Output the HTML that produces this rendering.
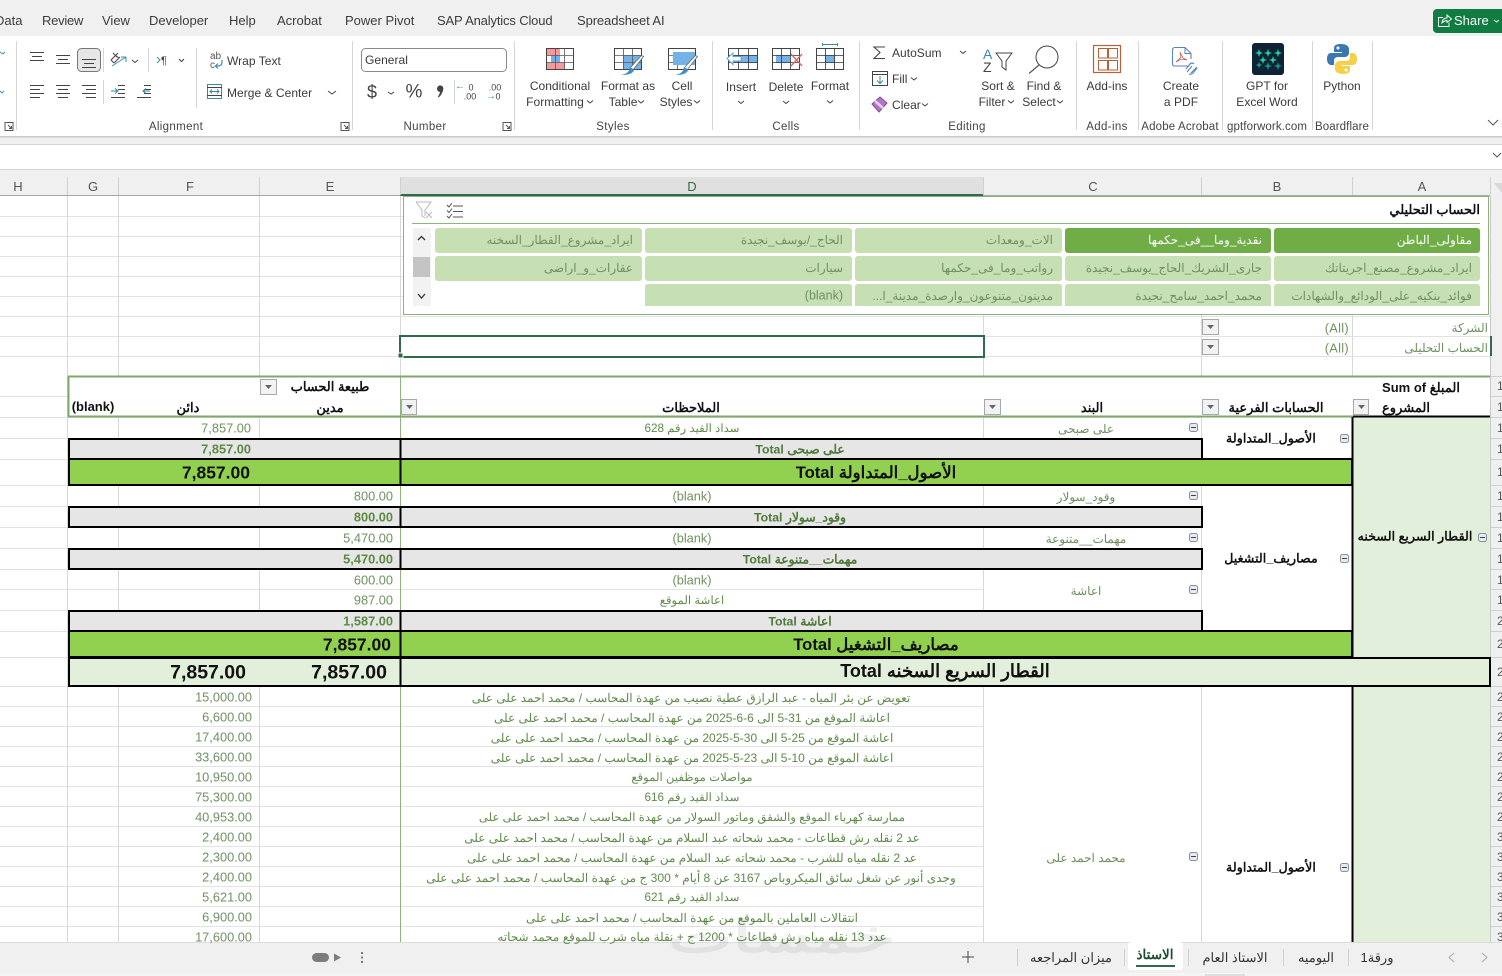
<!DOCTYPE html>
<html lang="en"><head><meta charset="utf-8"><title>Excel</title>
<style>
html,body{margin:0;padding:0}
body{position:relative;width:1502px;height:976px;overflow:hidden;background:#fff;font-family:"Liberation Sans",sans-serif;font-size:12px;color:#333}
svg.o{position:absolute;left:0;top:0}
.c,.l,.r{position:absolute;white-space:nowrap;line-height:1.2}
.c{transform:translate(-50%,-50%)}
.l{transform:translate(0,-50%)}
.r{transform:translate(-100%,-50%)}
.tab{font-size:13px;color:#3c3c3c;line-height:16px;margin-top:1px}
.rb{font-size:12px;color:#3a3a3a;letter-spacing:.03px}
.g{font-size:11.5px;color:#444;letter-spacing:.35px;margin-top:2px}
.h{font-size:13px;color:#555;margin-top:1px}
.a{font-size:11.7px;color:#5f8a4a;margin-top:1px;line-height:16px}
.a2{font-size:12px}
.t{font-size:12px;color:#6f9060;margin-top:1px}
.n{font-size:12.8px;color:#6f9160;margin-top:1px}
.nb{font-size:12.8px;font-weight:bold;color:#5c8a45;margin-top:1px}
.big{font-size:17.5px;font-weight:bold;color:#111;margin-top:1px}
.big2{font-size:19.5px;font-weight:bold;color:#111;margin-top:1px}
.th{font-size:13px;font-weight:bold;color:#111;margin-top:1px}
.tr{font-size:12.7px;font-weight:bold;color:#111;margin-top:1px}
.tg{font-size:12.3px;font-weight:bold;color:#4e7a3a;margin-top:1px}
.tb{font-size:16.6px;font-weight:bold;color:#111;margin-top:1px}
.s{font-size:12px;color:#6f9060}
.sw{font-size:12px;color:#fff}
</style></head><body>

<svg class="o" width="1502" height="976" viewBox="0 0 1502 976" xmlns="http://www.w3.org/2000/svg">
<!-- chrome -->
<rect x="0" y="0" width="1502" height="36" fill="#f0f0f0"/>
<rect x="0" y="36" width="1502" height="100" fill="#fff"/>
<rect x="0" y="136" width="1502" height="9" fill="#f0f0f0"/>
<rect x="0" y="136" width="1502" height="1.500" fill="#c9c9c9"/>
<rect x="0" y="144" width="1502" height="1" fill="#d4d4d4"/>
<rect x="0" y="169" width="1502" height="1" fill="#d4d4d4"/>
<rect x="0" y="170" width="1502" height="26" fill="#f0f0f0"/>
<rect x="400" y="177" width="583" height="18" fill="#e0e0e0"/>
<rect x="0" y="195" width="1490" height="1" fill="#a8a8a8"/>
<rect x="400" y="194" width="583" height="2" fill="#2f6b4a"/>
<g stroke="#d0d0d0"><path d="M67.500 177V195M118.500 177V195M259.500 177V195M400.500 177V195M983.500 177V195M1201.500 177V195M1352.500 177V195M1490.500 177V195"/></g>
<path d="M1494 183L1502 183L1502 193Z" fill="#d8d8d8"/>

<!-- share -->
<rect x="1433" y="9" width="75" height="24" rx="4" fill="#107c41"/>
<path d="M1443 17.500H1438.500V26.500H1449V22.500M1442 23C1442 20 1444 18 1447 18V15L1451.500 19L1447 22.500V20.500C1445 20.500 1443.500 21.500 1442 23Z" fill="none" stroke="#fff" stroke-width=".9"/>
<path d="M1494 20L1496.500 22L1499 20" fill="none" stroke="#fff" stroke-width="1"/>

<!-- group separators -->
<g stroke="#d6d6d6"><path d="M16.500 41V130M352.500 41V130M514.500 41V130M712.500 41V130M859.500 41V130M1076.500 41V130M1138.500 41V130M1222.500 41V130M1312.500 41V130M1372.500 41V130M103.500 48V72M103.500 80V104M148.500 48V72M196.500 48V108M454.500 80V104"/></g>

<!-- left fragments -->
<path d="M0 52L3 54L5 52M0 91L2 93L4 91" fill="none" stroke="#4a90b8"/>
<!-- launchers -->
<g fill="none" stroke="#555"><path d="M5 122.500H13V130.500H5ZM8 125L11.500 128.500M11.500 126V128.500H9"/><path d="M341 122.500H349V130.500H341ZM344 125L347.500 128.500M347.500 126V128.500H345"/><path d="M503 122.500H511V130.500H503ZM506 125L509.500 128.500M509.500 126V128.500H507"/></g>

<!-- alignment -->
<rect x="77.500" y="48.500" width="23" height="23" rx="4" fill="#e6e6e6" stroke="#777"/>
<g stroke="#444" fill="none">
<path d="M30 52.500H44M32 56.500H42M30 60.500H44"/>
<path d="M56 55.500H70M58 59.500H68M56 63.500H70"/>
<path d="M82 59.500H96M84 63.500H94M82 67.500H96"/>
<path d="M30 85.500H44M30 89.500H40M30 93.500H44M30 97.500H40"/>
<path d="M56 85.500H70M58 89.500H68M56 93.500H70M58 97.500H68"/>
<path d="M82 85.500H96M86 89.500H96M82 93.500H96M86 97.500H96"/>
<path d="M118 85.500H125M118 89.500H125M118 93.500H125M111 97.500H125"/>
<path d="M144 85.500H151M144 89.500H151M144 93.500H151M137 97.500H151"/>
<path d="M132 60L135 62.500L138 60" /><path d="M179 59L181.500 61.500L184 59"/><path d="M328 91L332 94L336 91"/><path d="M388 92L391 94L394 92"/><path d="M495 58L498 61L501 58"/>
<path d="M111 60L118 53M114 63L120 57M111 60L114 63M113 53L117 57M115 55L119 58"/>
</g>
<path d="M112 66L126 57M126 57H121M126 57V62" fill="none" stroke="#3f8db0"/>
<path d="M111 91H118M115 88.500L118 91L115 93.500M150 91H143M146 88.500L143 91L146 93.500" fill="none" stroke="#2d86a8"/>
<path d="M157 57L160 60L157 63" fill="none" stroke="#3f8db0"/>
<text x="161" y="64" font-size="11" fill="#444">¶</text>
<text x="210" y="59" font-size="10" fill="#555">ab</text>
<text x="210" y="68" font-size="10" fill="#555">c</text>
<path d="M222 60V62C222 65 220 66 218 66H216M218 63.500L215.500 66L218 68.500" fill="none" stroke="#3f8db0" stroke-width="1.200"/>
<rect x="207.500" y="84.500" width="14" height="14" fill="#fff" stroke="#3f86a8"/>
<path d="M207 87.500H222M207 95.500H222" stroke="#444"/>
<path d="M210 91.500H219M212 89.500L210 91.500L212 93.500M217 89.500L219 91.500L217 93.500" fill="none" stroke="#3f86a8"/>

<!-- number -->
<rect x="361.500" y="48.500" width="145" height="23" rx="4" fill="#fff" stroke="#8a8a8a"/>
<path d="M437 88.500a3.200 3.200 0 1 1 6.200 1.200C442.500 93 441 95.500 438.500 97.500L437.800 96.800C439 95 439.800 93.500 440 92A3.200 3.200 0 0 1 437 88.500Z" fill="#444"/>

<!-- conditional formatting -->
<g fill="none" stroke="#444">
<rect x="546.500" y="48.500" width="27" height="21" fill="#fff"/>
</g>
<rect x="547" y="49" width="13" height="6.500" fill="#f49a9a"/><rect x="551" y="55.500" width="9" height="7" fill="#6fb0e6"/><rect x="547" y="62.500" width="18" height="6.500" fill="#f49a9a"/>
<path d="M546.500 55.500H573.500M546.500 62.500H573.500M555.500 48.500V69.500M564.500 48.500V69.500" stroke="#555" fill="none" stroke-width=".8"/>
<!-- format as table -->
<rect x="614.500" y="48.500" width="27" height="21" fill="#fff" stroke="#444"/>
<rect x="623" y="55" width="18" height="14" fill="#74b3ea"/>
<path d="M614.500 55.500H641.500M614.500 62.500H641.500M623.500 48.500V69.500M632.500 48.500V69.500" stroke="#555" fill="none" stroke-width=".8"/>
<path d="M630 68L641.500 55.500L643.500 56.500L633 70Z" fill="#fff" stroke="#666" stroke-width=".8"/>
<path d="M621 74.500C626 74.500 629 72 630 68C632 67.500 633.500 69 634 70.500C632 74 627 75.500 621 74.500Z" fill="#3f8cc8"/>
<!-- cell styles -->
<rect x="668.500" y="48.500" width="27" height="21" fill="#fff" stroke="#444"/>
<rect x="673" y="52" width="22" height="13" fill="#74b3ea"/>
<path d="M668.500 55.500H673M668.500 62.500H673M677.500 65V69.500" stroke="#555" fill="none" stroke-width=".8"/>
<path d="M684 68L695.500 55.500L697.500 56.500L687 70Z" fill="#fff" stroke="#666" stroke-width=".8"/>
<path d="M675 74.500C680 74.500 683 72 684 68C686 67.500 687.500 69 688 70.500C686 74 681 75.500 675 74.500Z" fill="#3f8cc8"/>
<!-- insert -->
<rect x="728.500" y="48.500" width="29" height="21" fill="#fff" stroke="#444"/>
<rect x="730" y="55" width="27" height="8" fill="#74b3ea"/>
<path d="M728.500 55.500H757.500M728.500 62.500H757.500M738.500 48.500V69.500M748.500 48.500V69.500" stroke="#333" fill="none" stroke-width=".8"/>
<path d="M727 58.500L733 53V56.500H741V61H733V64.500Z" fill="#fff" stroke="#5aa3d8"/>
<!-- delete -->
<rect x="772.500" y="48.500" width="27" height="21" fill="#fff" stroke="#444"/>
<rect x="776" y="55" width="14" height="8" fill="#74b3ea"/>
<path d="M772.500 55.500H799.500M772.500 62.500H799.500M781.500 48.500V69.500M790.500 48.500V69.500" stroke="#333" fill="none" stroke-width=".8"/>
<path d="M791 54L802 66M802 54L791 66" stroke="#e06060" stroke-width="1.300" fill="none"/>
<!-- format -->
<rect x="816.500" y="48.500" width="27" height="21" fill="#fff" stroke="#444"/>
<rect x="825" y="55" width="10" height="8" fill="#74b3ea"/>
<path d="M816.500 55.500H843.500M816.500 62.500H843.500M825.500 48.500V69.500M834.500 48.500V69.500" stroke="#333" fill="none" stroke-width=".8"/>
<path d="M822.500 43V46M837.500 43V46M822.500 44.500H837.500" stroke="#3f86a8" fill="none"/>
<!-- editing -->
<path d="M885 47H874L880 52.500L874 58.500H885" fill="none" stroke="#444" stroke-width="1.100"/>
<path d="M960 51L963 53.500L966 51" fill="none" stroke="#444"/>
<rect x="872.500" y="71.500" width="15" height="14" fill="#fff" stroke="#444"/>
<path d="M872.500 74.500H887.500" stroke="#444"/>
<path d="M880 76V83M877 80.500L880 83.500L883 80.500" fill="none" stroke="#3f86a8"/>
<path d="M872 104L880 97L887 103L879 112Z" fill="#b276c8" stroke="#7d4d96"/>
<path d="M875 101L883 108" stroke="#e8d0ee" stroke-width="2.500"/>
<!-- sort -->
<text x="983" y="59" font-size="14" fill="#3f86b8">A</text>
<text x="983" y="72" font-size="14" fill="#444">Z</text>
<path d="M996 53H1012L1006 61V70L1002 67V61Z" fill="#fff" stroke="#444"/>
<!-- find -->
<circle cx="1047" cy="57" r="11" fill="none" stroke="#444"/>
<path d="M1039 65L1029 73.500" stroke="#555" stroke-width="1.200"/>
<!-- add-ins -->
<rect x="1093.500" y="45.500" width="27" height="27" fill="#fff" stroke="#b5623a" stroke-width="1.200"/>
<rect x="1098.500" y="48.500" width="9" height="9.500" fill="#fff" stroke="#b5623a"/>
<rect x="1108.500" y="48.500" width="9" height="9.500" fill="#fff" stroke="#b5623a"/>
<rect x="1098.500" y="60.500" width="9" height="9.500" fill="#fff" stroke="#b5623a"/>
<rect x="1108.500" y="60.500" width="9" height="9.500" fill="#fff" stroke="#b5623a"/>
<!-- pdf -->
<path d="M1189 66H1175Q1172.500 66 1172.500 63.500V50Q1172.500 47.500 1175 47.500H1185L1191 53.500V59" fill="none" stroke="#5a82bd" stroke-width="1.100"/>
<path d="M1185 47.500V53.500H1191" fill="none" stroke="#5a82bd"/>
<path d="M1176 62L1181 57L1180 52L1183 58L1187 60L1181 59Z" fill="none" stroke="#c0605a" stroke-width=".8"/>
<path d="M1187 72L1192 66M1191 73L1197 67M1186 69L1190 64Q1192 62 1194 64M1189 74Q1191 75 1193 73L1197 68" fill="none" stroke="#5a82bd" stroke-width="1.100"/>
<!-- gpt -->
<rect x="1252" y="43" width="32" height="32" rx="3" fill="#0f2338"/>
<path d="M1259 49l1 3 3 1-3 1-1 3-1-3-3-1 3-1zM1268 49l1 3 3 1-3 1-1 3-1-3-3-1 3-1zM1278 49l1 3 3 1-3 1-1 3-1-3-3-1 3-1zM1263 56l1 3 3 1-3 1-1 3-1-3-3-1 3-1zM1273 56l1 3 3 1-3 1-1 3-1-3-3-1 3-1z" fill="#1fd39b"/>
<path d="M1268 62l1 3 3 1-3 1-1 3-1-3-3-1 3-1zM1278 62l1 3 3 1-3 1-1 3-1-3-3-1 3-1zM1259 62l1 2 2 1-2 1-1 2-1-2-2-1 2-1z" fill="#129a78"/>
<!-- python -->
<path d="M1341 44C1334 44 1334 47 1334 49V52H1342V53H1331C1328 53 1327 56 1327 59C1327 63 1329 65 1331 65H1334V61C1334 58 1336 57 1338 57H1345C1347 57 1349 55 1349 53V49C1349 46 1346 44 1341 44Z" fill="#3c78b0"/>
<path d="M1343 74C1350 74 1350 71 1350 69V66H1342V65H1353C1356 65 1357 62 1357 59C1357 55 1355 53 1353 53H1350V57C1350 60 1348 61 1346 61H1339C1337 61 1335 63 1335 65V69C1335 72 1338 74 1343 74Z" fill="#f7d04a"/>
<circle cx="1338" cy="48" r="1.500" fill="#fff"/><circle cx="1346" cy="70" r="1.500" fill="#fff"/>
<!-- ribbon chevrons -->
<g fill="none" stroke="#444">
<path d="M587 100.500L590 103L593 100.500M638 100.500L641 103L644 100.500M694 100.500L697 103L700 100.500M738 101L741 103.500L744 101M783 101L786 103.500L789 101M827 100.500L830 103L833 100.500M911 77.500L914 80L917 77.500M922 103.500L925 106L928 103.500M1008 100.500L1011 103L1014 100.500M1057 100.500L1060 103L1063 100.500"/>
<path d="M1488 120L1493 125L1498 120M1493 153L1497 157L1501 153" stroke="#555"/>
</g>

<!-- sheet grid -->
<g stroke="#e2e2e2" fill="none">
<path d="M0 216.500H1490M0 236.500H1490M0 256.500H1490M0 276.500H1490M0 296.500H1490M0 316.500H1490M0 336.500H1490M0 356.500H1490M0 396.500H67M0 417.500H1490M0 438.500H1490M0 459.500H1490M0 485.500H1490M0 506.500H1490M0 527.500H1490M0 548.500H1490M0 569.500H1490M0 589.500H1490M0 610.500H1490M0 631.500H1490M0 657.500H1490M0 686.500H1490M0 706.500H1490M0 726.500H1490M0 746.500H1490M0 766.500H1490M0 786.500H1490M0 806.500H1490M0 826.500H1490M0 846.500H1490M0 866.500H1490M0 886.500H1490M0 906.500H1490M0 926.500H1490"/>
</g>
<g stroke="#d8d8d8" fill="none"><path d="M67.500 196V942M118.500 196V942M259.500 196V942M400.500 196V376M983.500 196V942M1201.500 196V942M1352.500 196V942"/></g>
<path d="M1490.500 196V942" stroke="#c8c8c8"/>
<rect x="1491" y="196" width="11" height="746" fill="#f0f0f0"/>
<g stroke="#cfcfcf"><path d="M1491 376.500H1502M1491 396.500H1502M1491 417.500H1502M1491 438.500H1502M1491 459.500H1502M1491 485.500H1502M1491 506.500H1502M1491 527.500H1502M1491 548.500H1502M1491 569.500H1502M1491 589.500H1502M1491 610.500H1502M1491 631.500H1502M1491 657.500H1502M1491 686.500H1502M1491 706.500H1502M1491 726.500H1502M1491 746.500H1502M1491 766.500H1502M1491 786.500H1502M1491 806.500H1502M1491 826.500H1502M1491 846.500H1502M1491 866.500H1502M1491 886.500H1502M1491 906.500H1502M1491 926.500H1502"/></g>
<rect x="1490" y="336" width="2" height="20" fill="#2f6b4a"/>

<!-- pivot header -->
<rect x="68" y="377" width="1422" height="40" fill="#fff"/>
<!-- merged whites -->
<rect x="984" y="569" width="217" height="41" fill="#fff"/>
<rect x="1202" y="417" width="150" height="42" fill="#fff"/>
<rect x="1202" y="485" width="150" height="146" fill="#fff"/>
<rect x="984" y="687" width="217" height="256" fill="#fff"/>
<rect x="1202" y="687" width="150" height="256" fill="#fff"/>
<path d="M983.500 569V610M1201.500 417V459" stroke="#d8d8d8"/>
<!-- A col -->
<rect x="1353" y="417" width="137" height="241" fill="#e2efda"/>
<rect x="1353" y="686" width="137" height="257" fill="#e2efda"/>

<!-- green line D left, header -->
<path d="M400.500 377V942" stroke="#8fb27e"/>
<path d="M68 376.500H1490M68 416.500H1353" stroke="#7fa86a" stroke-width="2"/>
<path d="M68.500 376V417" stroke="#7fa86a" stroke-width="2"/>

<!-- total rows -->
<g stroke="#000" stroke-width="2">
<rect x="69" y="439" width="1133" height="20" fill="#e7e6e6"/>
<rect x="69" y="459" width="1283" height="26" fill="#92d050"/>
<rect x="69" y="507" width="1133" height="20" fill="#e7e6e6"/>
<rect x="69" y="549" width="1133" height="20" fill="#e7e6e6"/>
<rect x="69" y="611" width="1133" height="20" fill="#e7e6e6"/>
<rect x="69" y="631" width="1283" height="26" fill="#92d050"/>
<rect x="69" y="658" width="1421" height="28" fill="#e2efda"/>
<path d="M400.500 439V485M400.500 507V527M400.500 549V569M400.500 611V686" fill="none"/>
<path d="M1352.500 417V657M1352.500 686V942M1353 416.500H1490" fill="none"/>
</g>

<!-- selection -->
<rect x="400" y="336" width="584" height="21" fill="#fff" stroke="#2f6b4a" stroke-width="2"/>
<rect x="398" y="353" width="5" height="5" fill="#2f6b4a" stroke="#fff"/>

<!-- slicer -->
<rect x="403.500" y="196.500" width="1085" height="118" fill="#fff" stroke="#8fb27e"/>
<path d="M412 223.500H1480" stroke="#8fb27e"/>
<path d="M416 202H431L425 210V216" fill="none" stroke="#b8b8b8"/><path d="M416 202L422 210V216L425 218" fill="none" stroke="#b8b8b8"/><path d="M426 212L432 218M432 212L426 218" stroke="#b8b8b8"/>
<path d="M447 205L449 207L452 203M447 210.500L449 212.500L452 208.500M447 216L449 218L452 214" fill="none" stroke="#555"/><path d="M453 206H463M453 211.500H463M453 217H463" stroke="#555"/>
<rect x="413" y="228" width="18" height="78" fill="#f2f2f2"/>
<rect x="413" y="257" width="17" height="20" fill="#c4c4c4"/>
<path d="M418 240L421.500 236.500L425 240M418 294L421.500 298L425 294" fill="none" stroke="#333" stroke-width="1.300"/>
<g fill="#c6e0b4">
<rect x="1274" y="228" width="206" height="25" rx="3" fill="#70ad47"/>
<rect x="1065" y="228" width="206" height="25" rx="3" fill="#70ad47"/>
<rect x="855" y="228" width="207" height="25" rx="3"/>
<rect x="645" y="228" width="207" height="25" rx="3"/>
<rect x="435" y="228" width="207" height="25" rx="3"/>
<rect x="1274" y="256" width="206" height="25" rx="3"/>
<rect x="1065" y="256" width="206" height="25" rx="3"/>
<rect x="855" y="256" width="207" height="25" rx="3"/>
<rect x="645" y="256" width="207" height="25" rx="3"/>
<rect x="435" y="256" width="207" height="25" rx="3"/>
<path d="M1274 306V287Q1274 284 1277 284H1477Q1480 284 1480 287V306ZM1065 306V287Q1065 284 1068 284H1268Q1271 284 1271 287V306ZM855 306V287Q855 284 858 284H1059Q1062 284 1062 287V306ZM645 306V287Q645 284 648 284H849Q852 284 852 287V306Z"/>
</g>

<!-- dropdown buttons -->
<g fill="#f2f2f2" stroke="#a8a8a8">
<rect x="1202.500" y="319.500" width="16" height="15"/><rect x="1202.500" y="339.500" width="16" height="15"/>
<rect x="260.500" y="379.500" width="16" height="15"/><rect x="401.500" y="399.500" width="15" height="15"/><rect x="984.500" y="399.500" width="16" height="15"/><rect x="1202.500" y="399.500" width="16" height="15"/><rect x="1353.500" y="399.500" width="15" height="15"/>
</g>
<g fill="#666"><path d="M1207 325H1214L1210.500 329ZM1207 345H1214L1210.500 349ZM265 385H272L268.500 389ZM406 405H413L409.500 409ZM989 405H996L992.500 409ZM1207 405H1214L1210.500 409ZM1358 405H1365L1361.500 409Z"/></g>

<!-- outline minus boxes -->
<g fill="#e6eaf2" stroke="#8a8f9c">
<rect x="1189.500" y="423.500" width="8" height="8" rx="2"/><rect x="1340.500" y="434.500" width="8" height="8" rx="2"/><rect x="1189.500" y="491.500" width="8" height="8" rx="2"/><rect x="1189.500" y="533.500" width="8" height="8" rx="2"/><rect x="1189.500" y="585.500" width="8" height="8" rx="2"/><rect x="1340.500" y="554.500" width="8" height="8" rx="2"/><rect x="1478.500" y="533.500" width="8" height="8" rx="2"/><rect x="1189.500" y="852.500" width="8" height="8" rx="2"/><rect x="1340.500" y="863.500" width="8" height="8" rx="2"/>
</g>
<path d="M1191 427.500H1196M1342 438.500H1347M1191 495.500H1196M1191 537.500H1196M1191 589.500H1196M1342 558.500H1347M1480 537.500H1485M1191 856.500H1196M1342 867.500H1347" stroke="#444"/>

<!-- bottom bar -->
<rect x="0" y="942" width="1502" height="34" fill="#f0f0f0"/>
<rect x="0" y="942" width="1502" height="1" fill="#dcdcdc"/>
<rect x="0" y="973" width="1502" height="3" fill="#f5f5f5"/>
<rect x="1205" y="974" width="40" height="2" fill="#dedede"/>
<rect x="1128" y="942" width="55" height="28" rx="3" fill="#fff"/>
<rect x="1136" y="965" width="39" height="2" fill="#2f6b4a"/>
<path d="M1017.500 949V966M1124.500 949V966M1188.500 949V966M1283.500 949V966M1348.500 949V966" stroke="#cfcfcf"/>
<rect x="312" y="953" width="17" height="9" rx="4.500" fill="#7d7d7d"/>
<path d="M334 953.500L341 957.500L334 961.500Z" fill="#7d7d7d"/>
<path d="M362 952V954M362 956.500V958.500M362 961V963" stroke="#555" stroke-width="1.500"/>
<path d="M968 951V963M962 957H974" stroke="#444"/>
<path d="M1454 953L1449 957.500L1454 962M1482 953L1487 957.500L1482 962" fill="none" stroke="#aaa"/>
</svg>

<!-- tabs -->
<div class="l tab" style="left:-5px;top:20px">Data</div>
<div class="l tab" style="left:42px;top:20px;letter-spacing:-.25px">Review</div>
<div class="l tab" style="left:102px;top:20px">View</div>
<div class="l tab" style="left:149px;top:20px">Developer</div>
<div class="l tab" style="left:229px;top:20px">Help</div>
<div class="l tab" style="left:277px;top:20px">Acrobat</div>
<div class="l tab" style="left:345px;top:20px">Power Pivot</div>
<div class="l tab" style="left:437px;top:20px;letter-spacing:-.15px">SAP Analytics Cloud</div>
<div class="l tab" style="left:577px;top:20px;letter-spacing:-.1px">Spreadsheet AI</div>
<div class="l" style="left:1454px;top:21px;color:#fff;font-size:13px">Share</div>

<!-- ribbon text -->
<div class="l rb" style="left:227px;top:61px">Wrap Text</div>
<div class="l rb" style="left:227px;top:93px">Merge &amp; Center</div>
<div class="l rb" style="left:365px;top:60px">General</div>
<div class="c" style="left:372px;top:93px;font-size:18px;color:#444">$</div>
<div class="c" style="left:414px;top:93px;font-size:19px;color:#444">%</div>
<div class="c" style="left:471px;top:88px;font-size:9px;color:#444">0</div><div class="c" style="left:470px;top:97px;font-size:9px;color:#444">.00</div>
<div class="c" style="left:460px;top:87px;font-size:10px;color:#2d86a8">←</div>
<div class="c" style="left:495px;top:88px;font-size:9px;color:#444">.00</div><div class="c" style="left:498px;top:97px;font-size:9px;color:#444">0</div>
<div class="c" style="left:491px;top:97px;font-size:10px;color:#2d86a8">→</div>
<div class="c rb" style="left:560px;top:86px">Conditional</div><div class="c rb" style="left:555px;top:102px">Formatting</div>
<div class="c rb" style="left:628px;top:86px">Format as</div><div class="c rb" style="left:623px;top:102px">Table</div>
<div class="c rb" style="left:682px;top:86px">Cell</div><div class="c rb" style="left:676px;top:102px">Styles</div>
<div class="c rb" style="left:741px;top:87px">Insert</div>
<div class="c rb" style="left:786px;top:87px">Delete</div>
<div class="c rb" style="left:830px;top:86px">Format</div>
<div class="l rb" style="left:892px;top:53px">AutoSum</div>
<div class="l rb" style="left:892px;top:79px">Fill</div>
<div class="l rb" style="left:892px;top:105px">Clear</div>
<div class="c rb" style="left:998px;top:86px">Sort &amp;</div><div class="c rb" style="left:992px;top:102px">Filter</div>
<div class="c rb" style="left:1044px;top:86px">Find &amp;</div><div class="c rb" style="left:1039px;top:102px">Select</div>
<div class="c rb" style="left:1107px;top:86px">Add-ins</div>
<div class="c rb" style="left:1181px;top:86px">Create</div><div class="c rb" style="left:1181px;top:102px">a PDF</div>
<div class="c rb" style="left:1267px;top:86px">GPT for</div><div class="c rb" style="left:1267px;top:102px">Excel Word</div>
<div class="c rb" style="left:1342px;top:86px">Python</div>
<div class="c g" style="left:176px;top:126px">Alignment</div>
<div class="c g" style="left:425px;top:126px">Number</div>
<div class="c g" style="left:613px;top:126px">Styles</div>
<div class="c g" style="left:786px;top:126px">Cells</div>
<div class="c g" style="left:967px;top:126px">Editing</div>
<div class="c g" style="left:1107px;top:126px">Add-ins</div>
<div class="c g" style="left:1180px;top:126px;letter-spacing:.15px">Adobe Acrobat</div>
<div class="c g" style="left:1267px;top:126px;letter-spacing:.1px">gptforwork.com</div>
<div class="c g" style="left:1342px;top:126px;letter-spacing:.1px">Boardflare</div>

<!-- col headers -->
<div class="c h" style="left:18px;top:186px">H</div>
<div class="c h" style="left:93px;top:186px">G</div>
<div class="c h" style="left:190px;top:186px">F</div>
<div class="c h" style="left:330px;top:186px">E</div>
<div class="c h" style="left:692px;top:186px;color:#2f6b4a">D</div>
<div class="c h" style="left:1093px;top:186px">C</div>
<div class="c h" style="left:1277px;top:186px">B</div>
<div class="c h" style="left:1422px;top:186px">A</div>

<!-- slicer text -->
<div class="r th" dir="rtl" style="left:1480px;top:209px">الحساب التحليلي</div>
<div class="r sw" dir="rtl" style="left:1472px;top:240px">مقاولى_الباطن</div>
<div class="r sw" dir="rtl" style="left:1262px;top:240px">نقدية_وما__فى_حكمها</div>
<div class="r s" dir="rtl" style="left:1053px;top:240px">الات_ومعدات</div>
<div class="r s" dir="rtl" style="left:843px;top:240px">الحاج_/يوسف_نجيدة</div>
<div class="r s" dir="rtl" style="left:633px;top:240px">ايراد_مشروع_القطار_السخنه</div>
<div class="r s" dir="rtl" style="left:1472px;top:268px">ايراد_مشروع_مصنع_اجريتاتك</div>
<div class="r s" dir="rtl" style="left:1262px;top:268px">جارى_الشريك_الحاج_يوسف_نجيدة</div>
<div class="r s" dir="rtl" style="left:1053px;top:268px">رواتب_وما_فى_حكمها</div>
<div class="r s" dir="rtl" style="left:843px;top:268px">سيارات</div>
<div class="r s" dir="rtl" style="left:633px;top:268px">عقارات_و_اراضى</div>
<div class="r s" dir="rtl" style="left:1472px;top:296px">فوائد_بنكيه_على_الودائع_والشهادات</div>
<div class="r s" dir="rtl" style="left:1262px;top:296px">محمد_احمد_سامح_نجيدة</div>
<div class="r s" dir="rtl" style="left:1053px;top:296px">مدينون_متنوعون_وارصدة_مدينة_ا...</div>
<div class="r s" style="left:843px;top:296px;font-size:12.500px">(blank)</div>

<!-- page filters -->
<div class="r t" dir="rtl" style="left:1488px;top:327px">الشركة</div>
<div class="r t" dir="rtl" style="left:1488px;top:347px">الحساب التحليلى</div>
<div class="r n" style="left:1349px;top:327px;letter-spacing:.3px">(All)</div>
<div class="r n" style="left:1349px;top:347px;letter-spacing:.3px">(All)</div>

<!-- pivot headers -->
<div class="c th" dir="rtl" style="left:330px;top:386px">طبيعة الحساب</div>
<div class="c th" dir="rtl" style="left:1421px;top:387px">المبلغ Sum of</div>
<div class="c th" dir="rtl" style="left:1406px;top:407px">المشروع</div>
<div class="c th" dir="rtl" style="left:1276px;top:407px">الحسابات الفرعية</div>
<div class="c th" dir="rtl" style="left:1092px;top:407px">البند</div>
<div class="c th" dir="rtl" style="left:691px;top:407px">الملاحظات</div>
<div class="c th" dir="rtl" style="left:330px;top:407px">مدين</div>
<div class="c th" dir="rtl" style="left:188px;top:407px">دائن</div>
<div class="c th" style="left:93px;top:406px">(blank)</div>

<!-- tree -->
<div class="c tr" dir="rtl" style="left:1271px;top:438px">الأصول_المتداولة</div>
<div class="c tr" dir="rtl" style="left:1271px;top:558px">مصاريف_التشغيل</div>
<div class="c tr" dir="rtl" style="left:1415px;top:536px">القطار السريع السخنه</div>
<div class="c tr" dir="rtl" style="left:1271px;top:867px">الأصول_المتداولة</div>
<div class="c t" dir="rtl" style="left:1086px;top:428px">على صبحى</div>
<div class="c t" dir="rtl" style="left:1086px;top:496px">وقود_سولار</div>
<div class="c t" dir="rtl" style="left:1086px;top:538px">مهمات__متنوعة</div>
<div class="c t" dir="rtl" style="left:1086px;top:590px">اعاشة</div>
<div class="c t" dir="rtl" style="left:1086px;top:857px">محمد احمد على</div>

<!-- notes top -->
<div class="c a" dir="rtl" style="left:692px;top:428px">سداد القيد رقم 628</div>
<div class="c n" style="left:692px;top:495px">(blank)</div>
<div class="c n" style="left:692px;top:537px">(blank)</div>
<div class="c n" style="left:692px;top:579px">(blank)</div>
<div class="c a" dir="rtl" style="left:692px;top:600px">اعاشة الموقع</div>

<!-- totals -->
<div class="c tg" dir="rtl" style="left:800px;top:449px">على صبحى Total</div>
<div class="c tb" dir="rtl" style="left:876px;top:472px">الأصول_المتداولة Total</div>
<div class="c tg" dir="rtl" style="left:800px;top:517px">وقود_سولار Total</div>
<div class="c tg" dir="rtl" style="left:800px;top:559px">مهمات__متنوعة Total</div>
<div class="c tg" dir="rtl" style="left:800px;top:621px">اعاشة Total</div>
<div class="c tb" dir="rtl" style="left:876px;top:644px">مصاريف_التشغيل Total</div>
<div class="c tb" dir="rtl" style="left:945px;top:671px;font-size:18px">القطار السريع السخنه Total</div>

<!-- amounts -->
<div class="r n" style="left:251px;top:427px">7,857.00</div>
<div class="r nb" style="left:251px;top:448px">7,857.00</div>
<div class="r big" style="left:250px;top:472px">7,857.00</div>
<div class="r n" style="left:393px;top:495px">800.00</div>
<div class="r nb" style="left:393px;top:516px">800.00</div>
<div class="r n" style="left:393px;top:537px">5,470.00</div>
<div class="r nb" style="left:393px;top:558px">5,470.00</div>
<div class="r n" style="left:393px;top:579px">600.00</div>
<div class="r n" style="left:393px;top:599px">987.00</div>
<div class="r nb" style="left:393px;top:620px">1,587.00</div>
<div class="r big" style="left:391px;top:644px">7,857.00</div>
<div class="r big2" style="left:387px;top:672px">7,857.00</div>
<div class="r big2" style="left:246px;top:672px">7,857.00</div>
<div class="r n" style="left:252px;top:696px">15,000.00</div>
<div class="r n" style="left:252px;top:716px">6,600.00</div>
<div class="r n" style="left:252px;top:736px">17,400.00</div>
<div class="r n" style="left:252px;top:756px">33,600.00</div>
<div class="r n" style="left:252px;top:776px">10,950.00</div>
<div class="r n" style="left:252px;top:796px">75,300.00</div>
<div class="r n" style="left:252px;top:816px">40,953.00</div>
<div class="r n" style="left:252px;top:836px">2,400.00</div>
<div class="r n" style="left:252px;top:856px">2,300.00</div>
<div class="r n" style="left:252px;top:876px">2,400.00</div>
<div class="r n" style="left:252px;top:896px">5,621.00</div>
<div class="r n" style="left:252px;top:916px">6,900.00</div>
<div class="r n" style="left:252px;top:936px">17,600.00</div>

<!-- notes list -->
<div class="c a a2" dir="rtl" style="left:691px;top:697px">تعويض عن بئر المياه - عبد الرازق عطية نصيب من عهدة المحاسب / محمد احمد على على</div>
<div class="c a a2" dir="rtl" style="left:692px;top:717px">اعاشة الموقع من 31-5 الى 6-6-2025 من عهدة المحاسب / محمد احمد على على</div>
<div class="c a a2" dir="rtl" style="left:692px;top:737px">اعاشة الموقع من 25-5 الى 30-5-2025 من عهدة المحاسب / محمد احمد على على</div>
<div class="c a a2" dir="rtl" style="left:692px;top:757px">اعاشة الموقع من 10-5 الى 23-5-2025 من عهدة المحاسب / محمد احمد على على</div>
<div class="c a" dir="rtl" style="left:692px;top:777px">مواصلات موظفين الموقع</div>
<div class="c a" dir="rtl" style="left:692px;top:797px">سداد القيد رقم 616</div>
<div class="c a" dir="rtl" style="left:692px;top:817px">ممارسة كهرباء الموقع والشقق وماتور السولار من عهدة المحاسب / محمد احمد على على</div>
<div class="c a a2" dir="rtl" style="left:692px;top:837px">عد 2 نقله رش قطاعات - محمد شحاته عبد السلام من عهدة المحاسب / محمد احمد على على</div>
<div class="c a a2" dir="rtl" style="left:692px;top:857px">عد 2 نقله مياه للشرب - محمد شحاته عبد السلام من عهدة المحاسب / محمد احمد على على</div>
<div class="c a" dir="rtl" style="left:691px;top:877px;font-size:12.100px">وجدى أنور عن شغل سائق الميكروباص 3167 عن 8 أيام * 300 ج من عهدة المحاسب / محمد احمد على على</div>
<div class="c a" dir="rtl" style="left:692px;top:897px">سداد القيد رقم 621</div>
<div class="c a a2" dir="rtl" style="left:692px;top:917px">انتقالات العاملين بالموقع من عهدة المحاسب / محمد احمد على على</div>
<div class="c a a2" dir="rtl" style="left:692px;top:936px">عدد 13 نقله مياه رش قطاعات * 1200 ج + نقلة مياه شرب للموقع محمد شحاته</div>

<!-- row numbers (clipped) -->
<div style="position:absolute;left:1491px;top:196px;width:11px;height:746px;overflow:hidden;font-size:12px;color:#555">
<span class="l" style="left:6px;top:190px">1</span><span class="l" style="left:6px;top:211px">1</span><span class="l" style="left:6px;top:232px">1</span><span class="l" style="left:6px;top:253px">1</span><span class="l" style="left:6px;top:276px">1</span><span class="l" style="left:6px;top:300px">1</span><span class="l" style="left:6px;top:321px">1</span><span class="l" style="left:6px;top:342px">1</span><span class="l" style="left:6px;top:363px">1</span><span class="l" style="left:6px;top:384px">1</span><span class="l" style="left:6px;top:404px">1</span><span class="l" style="left:6px;top:425px">2</span><span class="l" style="left:6px;top:448px">2</span><span class="l" style="left:6px;top:476px">2</span><span class="l" style="left:6px;top:501px">2</span><span class="l" style="left:6px;top:521px">2</span><span class="l" style="left:6px;top:541px">2</span><span class="l" style="left:6px;top:561px">2</span><span class="l" style="left:6px;top:581px">2</span><span class="l" style="left:6px;top:601px">2</span><span class="l" style="left:6px;top:621px">2</span><span class="l" style="left:6px;top:641px">3</span><span class="l" style="left:6px;top:661px">3</span><span class="l" style="left:6px;top:681px">3</span><span class="l" style="left:6px;top:701px">3</span><span class="l" style="left:6px;top:721px">3</span><span class="l" style="left:6px;top:741px">3</span>
</div>

<!-- sheet tabs -->
<div class="c" dir="rtl" style="left:1377px;top:958px;font-size:13px;color:#333">ورقة1</div>
<div class="c" dir="rtl" style="left:1316px;top:958px;font-size:13px;color:#333">اليوميه</div>
<div class="c" dir="rtl" style="left:1235px;top:958px;font-size:13px;color:#333">الاستاذ العام</div>
<div class="c" dir="rtl" style="left:1155px;top:955px;font-size:13.500px;font-weight:bold;color:#1f4d33">الاستاذ</div>
<div class="c" dir="rtl" style="left:1071px;top:958px;font-size:13px;color:#333">ميزان المراجعه</div>

<!-- watermark -->
<div style="position:absolute;left:782px;top:938px;transform:translate(-50%,-50%) scaleX(1.550);white-space:nowrap;line-height:1" dir="rtl"><span style="font-size:44px;font-weight:bold;color:#000;opacity:.06">خمسات</span></div>

</body></html>
